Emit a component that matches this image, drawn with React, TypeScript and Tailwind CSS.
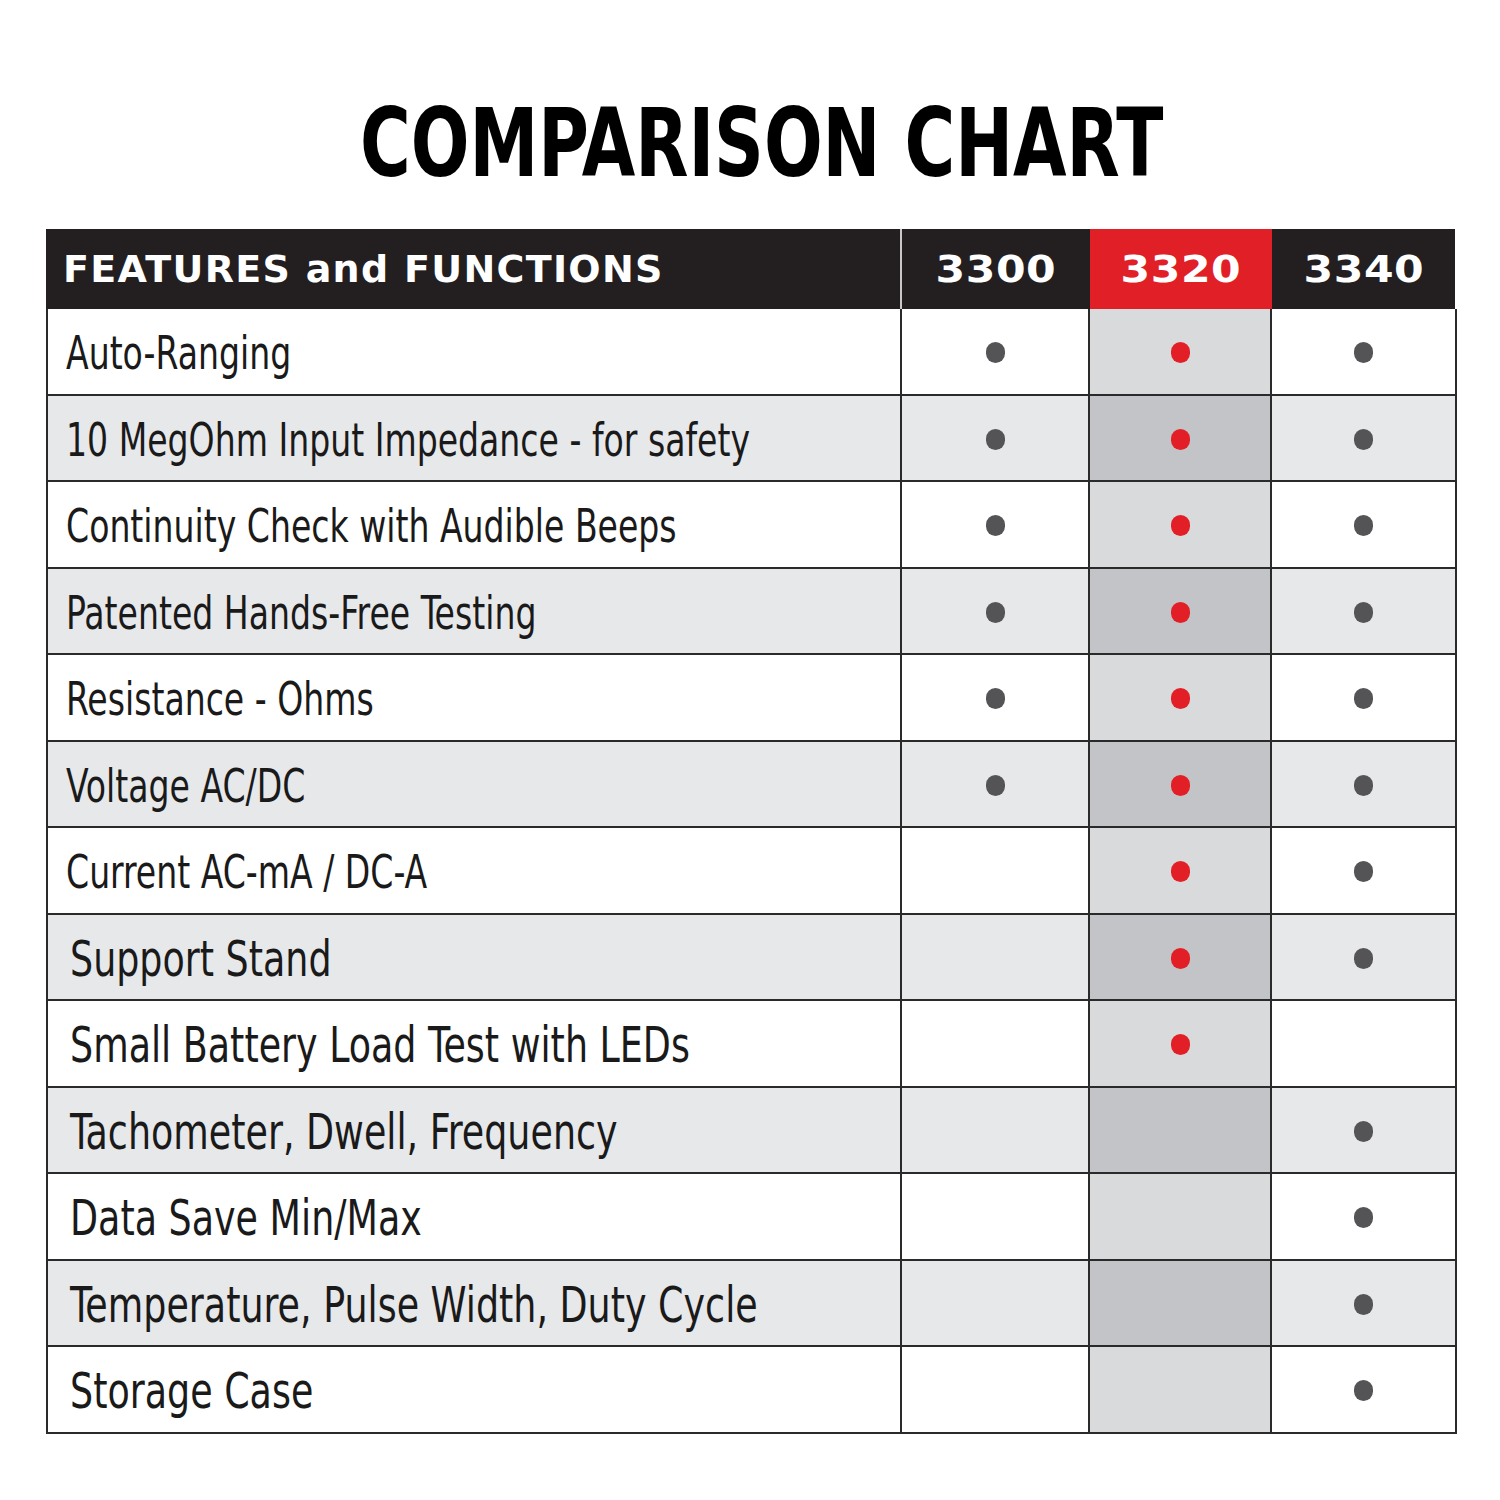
import React from "react";

// big: lower rows use a slightly larger type in the chart
const rows = [
  { label: "Auto-Ranging", has: [1, 1, 1], big: false },
  { label: "10 MegOhm Input Impedance - for safety", has: [1, 1, 1], big: false },
  { label: "Continuity Check with Audible Beeps", has: [1, 1, 1], big: false },
  { label: "Patented Hands-Free Testing", has: [1, 1, 1], big: false },
  { label: "Resistance - Ohms", has: [1, 1, 1], big: false },
  { label: "Voltage AC/DC", has: [1, 1, 1], big: false },
  { label: "Current AC-mA / DC-A", has: [0, 1, 1], big: false },
  { label: "Support Stand", has: [0, 1, 1], big: true },
  { label: "Small Battery Load Test with LEDs", has: [0, 1, 0], big: true },
  { label: "Tachometer, Dwell, Frequency", has: [0, 0, 1], big: true },
  { label: "Data Save Min/Max", has: [0, 0, 1], big: true },
  { label: "Temperature, Pulse Width, Duty Cycle", has: [0, 0, 1], big: true },
  { label: "Storage Case", has: [0, 0, 1], big: true },
];

const narrow = {
  fontFamily: '"DejaVu Sans Condensed", "Liberation Sans Narrow", "Liberation Sans", sans-serif',
};
const wide = { fontFamily: '"DejaVu Sans", "Liberation Sans", sans-serif' };

function Dot({ red }: { red?: boolean }) {
  return (
    <span
      className={
        "block w-[19px] h-[21px] rounded-full mt-[3px] " +
        (red ? "bg-[#e21f26]" : "bg-[#545456]")
      }
    />
  );
}

export default function App() {
  return (
    <div className="w-[1500px] h-[1500px] bg-white pt-[97px]">
      <h1
        style={narrow}
        className="h-[94px] text-[94px] leading-none font-bold text-center text-black pl-[24px] whitespace-nowrap"
      >
        <span className="inline-block origin-center scale-x-[0.817]">COMPARISON CHART</span>
      </h1>

      <div className="mt-[38px] ml-[46px] w-[1411px]">
        {/* header */}
        <div style={wide} className="flex h-[80px] w-[1409px] font-bold text-white text-[38px] leading-none">
          <div className="w-[856px] bg-[#231f20] border-r-2 border-[#c8c8c8] flex items-center pl-[17px] tracking-[1.3px]">
            FEATURES and FUNCTIONS
          </div>
          <div className="w-[188px] bg-[#231f20] flex items-center justify-center">
            <span className="inline-block scale-x-[1.12] tracking-[0.5px]">3300</span>
          </div>
          <div className="w-[182px] bg-[#e11f26] flex items-center justify-center">
            <span className="inline-block scale-x-[1.12] tracking-[0.5px]">3320</span>
          </div>
          <div className="flex-1 bg-[#231f20] flex items-center justify-center">
            <span className="inline-block scale-x-[1.12] tracking-[0.5px]">3340</span>
          </div>
        </div>

        {/* body */}
        {rows.map((r, i) => {
          const grey = i % 2 === 1;
          return (
            <div
              key={r.label}
              className={
                "flex h-[86.5px] border-l-2 border-r-2 border-b-2 border-[#2a2a2a] " +
                (grey ? "bg-[#e7e8ea]" : "bg-white")
              }
            >
              <div
                style={narrow}
                className={
                  "w-[854px] border-r-2 border-[#2a2a2a] flex items-center leading-none text-[#1a1a1a] whitespace-nowrap " +
                  (r.big ? "text-[50px] pl-[22px]" : "text-[46px] pl-[18px]")
                }
              >
                <span
                  className={
                    "inline-block origin-left mt-[4px] " +
                    (r.big ? "scale-x-[0.81]" : "scale-x-[0.80]")
                  }
                >
                  {r.label}
                </span>
              </div>
              <div className="w-[188px] border-r-2 border-[#2a2a2a] flex items-center justify-center">
                {r.has[0] ? <Dot /> : null}
              </div>
              <div
                className={
                  "w-[182px] border-r-2 border-[#2a2a2a] flex items-center justify-center " +
                  (grey ? "bg-[#c3c4c7]" : "bg-[#d9dadc]")
                }
              >
                {r.has[1] ? <Dot red /> : null}
              </div>
              <div className="flex-1 flex items-center justify-center">
                {r.has[2] ? <Dot /> : null}
              </div>
            </div>
          );
        })}
      </div>
    </div>
  );
}
